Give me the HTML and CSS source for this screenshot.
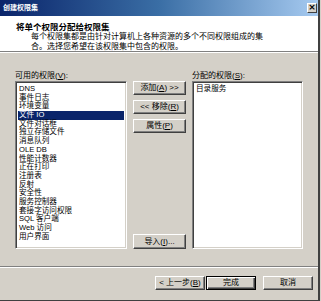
FILE: index.html
```html
<!DOCTYPE html>
<html>
<head>
<meta charset="utf-8">
<link rel="stylesheet" href="styles.css">
</head>
<body>
<div class="window">
  <div class="titlebar">
    <span class="title">创建权限集</span>
    <span class="close">×</span>
  </div>
  <div class="header">
    <div class="heading">将单个权限分配给权限集</div>
    <div class="desc">每个权限集都是由针对计算机上各种资源的多个不同权限组成的集<br>合。选择您希望在该权限集中包含的权限。</div>
  </div>
  <div class="content">
    <div class="lists">
      <div class="col col-left">
        <div class="label">可用的权限(<u>V</u>):</div>
        <div class="listbox">
          <div class="item">DNS</div>
          <div class="item">事件日志</div>
          <div class="item">环境变量</div>
          <div class="item selected">文件 IO</div>
          <div class="item">文件对话框</div>
          <div class="item">独立存储文件</div>
          <div class="item">消息队列</div>
          <div class="item">OLE DB</div>
          <div class="item">性能计数器</div>
          <div class="item">正在打印</div>
          <div class="item">注册表</div>
          <div class="item">反射</div>
          <div class="item">安全性</div>
          <div class="item">服务控制器</div>
          <div class="item">套接字访问权限</div>
          <div class="item">SQL 客户端</div>
          <div class="item">Web 访问</div>
          <div class="item">用户界面</div>
        </div>
      </div>
      <div class="col col-buttons">
        <div class="btn">添加(<u>A</u>) &gt;&gt;</div>
        <div class="btn">&lt;&lt; 移除(<u>R</u>)</div>
        <div class="btn">属性(<u>P</u>)</div>
        <div class="btn btn-import">导入(<u>I</u>)...</div>
      </div>
      <div class="col col-right">
        <div class="label">分配的权限(<u>S</u>):</div>
        <div class="listbox">
          <div class="item">目录服务</div>
        </div>
      </div>
    </div>
  </div>
  <div class="separator"></div>
  <div class="footer">
    <div class="btn fbtn">&lt; 上一步(<u>B</u>)</div>
    <div class="btn fbtn default">完成</div>
    <div class="btn fbtn cancel">取消</div>
  </div>
</div>
</body>
</html>
```

FILE: styles.css
```css
html, body {
  margin: 0;
  padding: 0;
  background: #d4d0c8;
}
body {
  width: 321px;
  height: 301px;
  overflow: hidden;
  font-family: "Liberation Sans", "Noto Sans CJK SC", sans-serif;
  font-size: 8px;
  color: #000;
}
.window {
  box-sizing: border-box;
  width: 320px;
  height: 301px;
  background: #d4d0c8;
  border-right: 2px solid #404040;
  border-bottom: 1px solid #404040;
  display: flex;
  flex-direction: column;
}
.titlebar {
  height: 16px;
  flex: none;
  background: linear-gradient(to right, #0a246a 0%, #3a6ea5 50%, #a6caf0 100%);
  display: flex;
  align-items: center;
  justify-content: space-between;
  padding: 0 1px 0 3px;
}
.title {
  color: #fff;
  font-weight: bold;
  font-size: 7px;
  line-height: 10px;
}
.close {
  box-sizing: border-box;
  width: 10px;
  height: 10px;
  background: #d4d0c8;
  border: 1px solid;
  border-color: #fff #404040 #404040 #fff;
  font-size: 9px;
  line-height: 7px;
  text-align: center;
  font-weight: bold;
  font-family: "DejaVu Sans", sans-serif;
}
.header {
  flex: none;
  height: 36px;
  box-sizing: border-box;
  background: #fff;
  padding: 6px 0 0 16px;
  border-bottom: 1px solid #808080;
  box-shadow: 0 1px 0 #fff;
}
.heading {
  font-weight: bold;
  font-size: 8.5px;
  line-height: 10px;
}
.desc {
  padding-left: 15px;
  line-height: 10px;
  font-size: 8px;
  color: #000;
}
.content {
  flex: none;
  padding: 19px 0 0 15px;
}
.lists {
  display: flex;
  gap: 6px;
  height: 178px;
}
.col {
  display: flex;
  flex-direction: column;
}
.col-left { width: 112px; }
.col-right { width: 111px; }
.col-buttons {
  width: 53px;
  padding-top: 10px;
  box-sizing: border-box;
  gap: 5px;
}
.label {
  height: 10px;
  line-height: 9px;
}
.listbox {
  flex: 1;
  box-sizing: border-box;
  background: #fff;
  border: 1px solid;
  border-color: #808080 #fff #fff #808080;
  box-shadow: inset 1px 1px 0 #404040, inset -1px -1px 0 #d4d0c8;
  padding: 3px 2px;
}
.item {
  height: 8.7px;
  line-height: 8.7px;
  font-size: 7.6px;
  padding-left: 1px;
  white-space: nowrap;
}
.selected {
  background: #0a246a;
  color: #fff;
}
.btn {
  box-sizing: border-box;
  height: 14px;
  background: #d4d0c8;
  border: 1px solid;
  border-color: #fff #404040 #404040 #fff;
  box-shadow: inset -1px -1px 0 #808080;
  display: flex;
  align-items: center;
  justify-content: center;
  line-height: 10px;
  white-space: nowrap;
}
.btn-import {
  margin-top: auto;
  height: 15px;
}
.separator {
  margin-top: 17px;
  height: 1px;
  border-top: 1px solid #808080;
  background: #fff;
  flex: none;
}
.footer {
  display: flex;
  justify-content: flex-end;
  padding: 8px 5px 0 0;
}
.fbtn {
  width: 50px;
}
.default {
  margin-left: 1px;
  border: 1px solid #000;
  box-shadow: inset 1px 1px 0 #fff, inset -1px -1px 0 #404040, inset -2px -2px 0 #808080;
}
.cancel {
  margin-left: 7px;
}
```
